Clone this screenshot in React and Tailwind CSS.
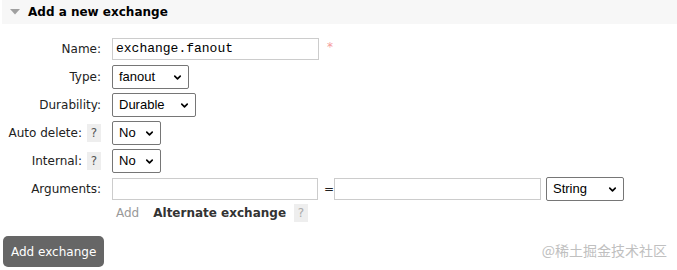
import { ChevronDown } from "lucide-react";

function FakeSelect({ value, width }) {
    return (
        <div
            className={`flex h-[24px] shrink-0 items-center justify-between rounded-[2px] border border-[#767676] bg-white pl-[6px] pr-[5px] font-['Liberation_Sans',Arial,sans-serif] text-[13px] text-black ${width}`}
        >
            <span>{value}</span>
            <ChevronDown size={11} strokeWidth={3.5} className="text-black" />
        </div>
    );
}

function Help({ light }) {
    return (
        <span
            className={`ml-[5px] flex h-[18px] w-[14px] items-center justify-center bg-[#eeeeee] text-[12px] ${light ? "text-[#aaaaaa]" : "text-[#555555]"
                }`}
        >
            ?
        </span>
    );
}

function Row({ label, help, children }) {
    return (
        <div className="flex h-[28px] items-center">
            <div className="flex w-[101px] shrink-0 items-center justify-end">
                <span>{label}</span>
                {help && <Help />}
            </div>
            <div className="ml-[11px] flex items-center">{children}</div>
        </div>
    );
}

export default function App() {
    return (
        <div className="relative h-[270px] w-[677px] bg-white font-['DejaVu_Sans',Verdana,sans-serif] text-[12px] text-[#222222]">
            {/* Section header */}
            <div className="ml-[2px] flex h-[24px] items-center bg-[#f7f7f7]">
                <svg width="10" height="6" viewBox="0 0 10 6" className="ml-[8px]">
                    <path d="M0 0 L10 0 L5 5.5 Z" fill="#a0a0a0" />
                </svg>
                <span className="ml-[8px] font-bold text-black">Add a new exchange</span>
            </div>

            <div className="mt-[11px]">
                <Row label="Name:">
                    <div className="flex h-[22px] w-[207px] shrink-0 items-center border border-[#cccccc] px-[3px] font-['Liberation_Mono','Courier_New',monospace] text-[13px] text-black">
                        exchange.fanout
                    </div>
                    <span className="ml-[8px] -mt-[4px] text-[12px] text-[#f59a9a]">*</span>
                </Row>
                <Row label="Type:">
                    <FakeSelect value="fanout" width="w-[77px]" />
                </Row>
                <Row label="Durability:">
                    <FakeSelect value="Durable" width="w-[84px]" />
                </Row>
                <Row label="Auto delete:" help>
                    <FakeSelect value="No" width="w-[49px]" />
                </Row>
                <Row label="Internal:" help>
                    <FakeSelect value="No" width="w-[49px]" />
                </Row>
                <Row label="Arguments:">
                    <div className="h-[22px] w-[206px] shrink-0 border border-[#cccccc]" />
                    <span className="ml-[6px] mr-[5px] w-[5px] shrink-0 text-[12px]">=</span>
                    <div className="h-[22px] w-[207px] shrink-0 border border-[#cccccc]" />
                    <div className="ml-[5px]">
                        <FakeSelect value="String" width="w-[78px]" />
                    </div>
                </Row>

                <div className="ml-[116px] flex h-[20px] items-center">
                    <span className="text-[#999999]">Add</span>
                    <span className="ml-[14px] font-bold text-[#333333]">Alternate exchange</span>
                    <span className="ml-[3px]">
                        <Help light />
                    </span>
                </div>
            </div>

            <div className="mt-[13px] flex items-end justify-between">
                <button className="ml-[3px] h-[31px] rounded-[5px] bg-[#666666] px-[8px] text-[12px] text-white">
                    Add exchange
                </button>
                <span className="mb-[6px] mr-[10px] font-['Noto_Sans_CJK_SC',sans-serif] text-[14px] text-[#c0c0c0]">
                    @稀土掘金技术社区
                </span>
            </div>
        </div>
    );
}
